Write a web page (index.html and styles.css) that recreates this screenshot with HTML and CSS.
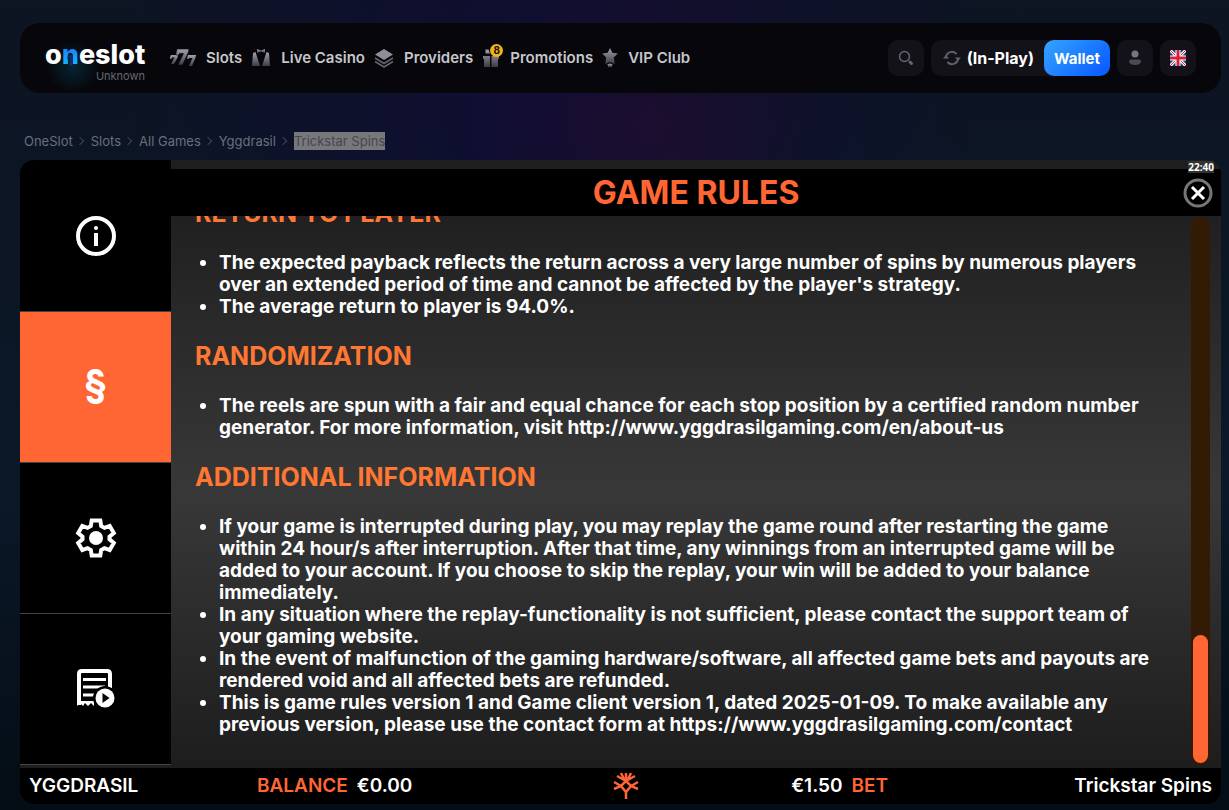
FILE: index.html
```
<!DOCTYPE html>
<html lang="en">
  <head>
    <meta charset="UTF-8" />
    <meta name="viewport" content="width=device-width, initial-scale=1.0" />
    <title>Trickstar Spins - OneSlot</title>
    <link rel="stylesheet" href="styles.css">
  </head>
  <body>
    <svg class="defs" width="0" height="0" aria-hidden="true">
      <linearGradient id="metal" x1="0" y1="0" x2="0" y2="1">
        <stop offset="0" stop-color="#a3a1ae" />
        <stop offset="1" stop-color="#3d3c45" />
      </linearGradient>
    </svg>

    <header class="header">
      <a href="#" class="logo">
        <span class="logo-text">o<span class="logo-n">n</span>eslot</span>
        <span class="logo-user">Unknown</span>
      </a>

      <nav class="nav">
        <a href="#">
          <svg width="26" height="18" viewBox="0 0 26 18">
            <g fill="url(#metal)">
              <path d="M0 8l1-2h7l-.5 2.500L4 15H1l3.500-6.500H2L1.500 10H0z" />
              <path d="M17.500 8l.5-2h8l-.5 2.500L22 17h-3l3.500-8H19l-.5 1H17z" />
              <path d="M6 4.500L7 0h12l-.7 3.500L12.500 16H8l5.500-11.500h-4L9 6H5.700z" stroke="#08070c" stroke-width=".6" />
            </g>
          </svg>
          Slots
        </a>
        <a href="#">
          <svg width="20" height="18" viewBox="0 0 20 18" fill="url(#metal)">
            <path d="M6 0l4 1.500L14 0v4l-4-1.500L6 4z" />
            <path d="M4.500 3L2 4 1 17h8z" />
            <path d="M15.500 3L18 4l1 13h-8z" />
          </svg>
          Live Casino
        </a>
        <a href="#">
          <svg width="20" height="20" viewBox="0 0 20 20">
            <path d="M10 1l9 5.500-9 5.500-9-5.500z" fill="#8f8d9a" />
            <path d="M1 10l9 5.500 9-5.500M1 13.500L10 19l9-5.500" fill="none" stroke="#66646f" stroke-width="1.500" />
          </svg>
          Providers
        </a>
        <a href="#">
          <span class="gift">
            <svg width="18" height="20" viewBox="0 0 18 20" fill="url(#metal)">
              <path d="M3.500 1.500h3l1.500 4H3.500zM1 8h7v3H1zM9.500 8H17v3H9.500zM2 11h6v8H2zM9.500 11H16v8H9.500z" />
            </svg>
            <span class="badge">8</span>
          </span>
          Promotions
        </a>
        <a href="#">
          <svg width="16" height="20" viewBox="0 0 16 20" fill="url(#metal)">
            <path d="M8 0l2.300 4.800 5.500.8-4 3.900 1 6.500-4.800-2-4.800 2 1-6.500-4-3.900 5.500-.8z" />
            <path d="M5 16.500l3-1 3 1-1.200 1v2L8 18.500l-1.800 1v-2z" />
          </svg>
          VIP Club
        </a>
      </nav>

      <div class="actions">
        <button type="button" class="square" aria-label="Search">
          <svg width="18" height="18" viewBox="0 0 18 18" fill="none" stroke="#66656e">
            <circle cx="7.500" cy="7.500" r="5" stroke-width="1.500" />
            <path d="M13 13l1.500 1.500" stroke-width="3" stroke-linecap="round" />
          </svg>
        </button>
        <div class="balance-box">
          <button type="button" class="play">
            <svg width="18" height="18" viewBox="0 0 18 18" fill="none" stroke="#62616b" stroke-width="2">
              <path d="M3 8a6 6 0 0 1 10.500-3M15 10a6 6 0 0 1-10.500 3" />
              <path d="M0 9.500h6L3 6zM12 8.500h6L15 12z" fill="#62616b" stroke="none" />
            </svg>
            (In-Play)
          </button>
          <button type="button" class="wallet">Wallet</button>
        </div>
        <button type="button" class="square" aria-label="Profile">
          <svg width="14" height="16" viewBox="0 0 14 16">
            <circle cx="7" cy="4" r="3.500" fill="#77757f" />
            <path d="M3 9.500h8c3 0 3 5.500-4 5.500S0 9.500 3 9.500z" fill="#4c4b54" />
          </svg>
        </button>
        <button type="button" class="square" aria-label="Language">
          <svg width="16" height="16" viewBox="0 0 16 16">
            <path fill="#1b3a86" d="M0 0h16v16H0z" />
            <path d="M0 0l16 16M16 0L0 16" stroke="#fff" stroke-width="3" />
            <path d="M0 0l16 16M16 0L0 16" stroke="#d8223c" stroke-width="1" />
            <path d="M8 0v16M0 8h16" stroke="#fff" stroke-width="5" />
            <path d="M8 0v16M0 8h16" stroke="#d8223c" stroke-width="3" />
          </svg>
        </button>
      </div>
    </header>

    <nav class="breadcrumbs" aria-label="Breadcrumb">
      <a href="#">OneSlot</a>
      <a href="#">Slots</a>
      <a href="#">All Games</a>
      <a href="#">Yggdrasil</a>
      <span class="current">Trickstar Spins</span>
    </nav>

    <main class="game">
      <span class="clock">22:40</span>
      <div class="game-body">
        <div class="tabs">
          <button type="button" aria-label="Info">
            <svg width="42" height="42" viewBox="0 0 42 42">
              <circle cx="21" cy="21" r="18" fill="none" stroke="#fff" stroke-width="4" />
              <circle cx="21" cy="13" r="2" fill="#fff" />
              <path d="M19 18h4v13h-4z" fill="#fff" />
            </svg>
          </button>
          <button type="button" class="active">§</button>
          <button type="button" aria-label="Settings">
            <svg width="42" height="42" viewBox="0 0 42 42">
              <path d="M16.700 3.500h8.600l.9 5.500 3.300 1.900 5.200-2 4.100 7.200-4.300 3.500v2.800l4.300 3.500-4.100 7.200-5.200-2-3.300 1.900-.9 5.500h-8.600l-.9-5.500-3.300-1.900-5.200 2-4.100-7.200 4.300-3.500v-2.800l-4.300-3.500 4.100-7.200 5.200 2L15.800 9z" fill="none" stroke="#fff" stroke-width="4" />
              <circle cx="21" cy="21" r="7" fill="#fff" />
            </svg>
          </button>
          <button type="button" aria-label="Game history">
            <svg width="42" height="42" viewBox="0 0 42 42">
              <path d="M4 37V6q0-3 3-3h25q3 0 3 3v14" fill="none" stroke="#fff" stroke-width="4" />
              <path d="M8 11.500h23M8 19h22M8 27h11" stroke="#fff" stroke-width="3" />
              <path d="M2 33h17v5l-3-3-3 3-3-3-2 3-3-3-3 3z" fill="#fff" />
              <circle cx="30" cy="30" r="12" />
              <circle cx="30" cy="30" r="9.500" fill="#fff" />
              <path d="M27.500 25l7 5-7 5z" />
            </svg>
          </button>
        </div>

        <section class="rules">
          <div class="rules-title">
            <h1>GAME RULES</h1>
            <button type="button" class="close" aria-label="Close">
              <svg width="30" height="30" viewBox="0 0 30 30" fill="none">
                <circle cx="15" cy="15" r="13" stroke="#777" stroke-width="3" />
                <path d="M9 9l12 12M21 9L9 21" stroke="#fff" stroke-width="3" />
              </svg>
            </button>
          </div>

          <div class="rules-content">
            <div class="rules-text">
              <h2>RETURN TO PLAYER</h2>
              <ul>
                <li>The expected payback reflects the return across a very large number of spins by numerous players<br />over an extended period of time and cannot be affected by the player's strategy.</li>
                <li>The average return to player is 94.0%.</li>
              </ul>
              <h2>RANDOMIZATION</h2>
              <ul>
                <li>The reels are spun with a fair and equal chance for each stop position by a certified random number<br />generator. For more information, visit http://www.yggdrasilgaming.com/en/about-us</li>
              </ul>
              <h2>ADDITIONAL INFORMATION</h2>
              <ul>
                <li>If your game is interrupted during play, you may replay the game round after restarting the game<br />within 24 hour/s after interruption. After that time, any winnings from an interrupted game will be<br />added to your account. If you choose to skip the replay, your win will be added to your balance<br />immediately.</li>
                <li>In any situation where the replay-functionality is not sufficient, please contact the support team of<br />your gaming website.</li>
                <li>In the event of malfunction of the gaming hardware/software, all affected game bets and payouts are<br />rendered void and all affected bets are refunded.</li>
                <li>This is game rules version 1 and Game client version 1, dated 2025-01-09. To make available any<br />previous version, please use the contact form at https://www.yggdrasilgaming.com/contact</li>
              </ul>
            </div>
            <div class="scrollbar"><div class="thumb"></div></div>
          </div>
        </section>
      </div>

      <footer class="game-footer">
        <div class="footer-left">
          <span class="brand">YGGDRASIL</span>
          <span><b>BALANCE</b>€0.00</span>
        </div>
        <svg width="26" height="28" viewBox="0 0 26 28" fill="none" stroke="#ff6633" stroke-width="2.500">
          <path d="M13 27v-7M8 14l5 6 5-6M1 17l7-3 5-5 5 5 7 3M1 10l7 4M25 10l-7 4M13 9V1M13 9L4 4M13 9l9-5M8 1l3 6M18 1l-3 6" />
        </svg>
        <div class="footer-right">
          <span>€1.50<b>BET</b></span>
          <span>Trickstar Spins</span>
        </div>
      </footer>
    </main>
  </body>
</html>
```

FILE: styles.css
```
* {
  box-sizing: border-box;
}

body {
  margin: 0;
  padding: 23px 8px 6px 20px;
  min-height: 100vh;
  font-family: "Inter", "Liberation Sans", sans-serif;
  color: #fff;
  background:
    radial-gradient(circle at 53% 125px, rgba(36, 12, 46, 0.6), transparent 180px),
    radial-gradient(ellipse at 45% 100px, rgba(16, 12, 56, 0.8), transparent 45%),
    linear-gradient(#0d1422, #0b1828 60%, #040d15);
}

button {
  border: none;
  padding: 0;
  background: none;
  color: #fff;
  font-family: inherit;
  cursor: pointer;
}

a {
  color: inherit;
  text-decoration: none;
}

svg {
  display: block;
  flex: none;
}

.defs {
  position: absolute;
}

/* header */
.header {
  display: flex;
  align-items: center;
  height: 70px;
  padding: 0 25px;
  border-radius: 20px;
  background-color: #07070b;
}

.logo {
  display: flex;
  flex-direction: column;
  justify-content: center;
  width: 100px;
  height: 70px;
  margin-right: 25px;
  padding-top: 6px;
  background: radial-gradient(circle at 28px 44px, rgba(0, 120, 170, 0.25), transparent 26px);
}

.logo-text {
  font-size: 27px;
  line-height: 30px;
  font-weight: 800;
}

.logo-n {
  position: relative;
  color: transparent;
  background: linear-gradient(#1b62ff, #12c8ff);
  background-clip: text;
}

.logo-n::after {
  content: "1";
  position: absolute;
  left: 5px;
  bottom: 3px;
  color: #0c2f6b;
  font-size: 15px;
  line-height: 15px;
}

.logo-user {
  font-size: 11px;
  line-height: 12px;
  text-align: right;
  color: #66666e;
}

.nav {
  display: flex;
  gap: 9px;
}

.nav a {
  display: flex;
  align-items: center;
  gap: 10px;
  font-size: 15px;
  line-height: 20px;
  font-weight: 600;
  color: #c6c6cb;
  white-space: nowrap;
}

.gift {
  position: relative;
}

.badge {
  position: absolute;
  top: -4px;
  left: 8px;
  width: 13px;
  height: 13px;
  border-radius: 50%;
  background-color: #f5b217;
  color: #111;
  font-size: 10px;
  line-height: 13px;
  font-weight: 700;
  text-align: center;
}

.actions {
  display: flex;
  gap: 7px;
  margin-left: auto;
}

.square {
  display: flex;
  align-items: center;
  justify-content: center;
  width: 36px;
  height: 36px;
  border-radius: 10px;
  background-color: #121218;
}

.balance-box {
  display: flex;
  border-radius: 10px;
  background-color: #121218;
}

.play {
  display: flex;
  align-items: center;
  gap: 6px;
  padding: 0 10px 0 12px;
  font-size: 16px;
  font-weight: 700;
}

.wallet {
  width: 66px;
  height: 36px;
  border-radius: 10px;
  background: linear-gradient(135deg, #36a4ff, #0557ff);
  font-size: 15px;
  font-weight: 700;
}

/* breadcrumbs */
.breadcrumbs {
  display: flex;
  gap: 8px;
  margin: 39px 4px 10px;
  font-size: 13px;
  line-height: 18px;
  color: #6a6e7d;
}

.breadcrumbs a {
  display: flex;
  align-items: center;
  gap: 4px;
}

.breadcrumbs a::after {
  content: "";
  width: 5px;
  height: 5px;
  border: solid #3e4255;
  border-width: 1px 1px 0 0;
  transform: rotate(45deg);
}

.current {
  background-color: #77787c;
  color: #46474d;
}

/* game */
.game {
  position: relative;
  overflow: hidden;
  border-radius: 14px;
  background-color: #1e1e1e;
}

.clock {
  position: absolute;
  top: 1px;
  right: 7px;
  background-color: #333;
  font-family: "Noto Sans", sans-serif;
  font-size: 10px;
  line-height: 12px;
  font-weight: 700;
}

.game-body {
  display: flex;
  height: 608px;
}

.tabs {
  flex: none;
  width: 151px;
  border-top: 1px solid #000;
}

.tabs button {
  display: flex;
  align-items: center;
  justify-content: center;
  width: 100%;
  height: 151px;
  border-bottom: 1px solid #444;
  background-color: #000;
  font-size: 40px;
  font-weight: 700;
}

.tabs .active {
  padding-bottom: 8px;
  background-color: #ff6633;
}

.rules {
  flex: 1;
  display: flex;
  flex-direction: column;
  min-width: 0;
  padding-top: 9px;
}

.rules-title {
  display: flex;
  align-items: center;
  flex: none;
  height: 47px;
  padding: 0 8px 0 38px;
  background-color: #000;
}

.rules-title h1 {
  flex: 1;
  margin: 0;
  font-size: 32px;
  line-height: 36px;
  text-align: center;
  color: #ff6633;
}

.rules-content {
  flex: 1;
  display: flex;
  min-height: 0;
  padding-right: 11px;
  background: linear-gradient(#202020, #383838 50%, #1d1d1d);
}

/* scrolled to the end of the text */
.rules-text {
  flex: 1;
  display: flex;
  flex-direction: column;
  justify-content: flex-end;
  overflow: hidden;
  padding: 0 0 32px 24px;
}

.rules-text h2 {
  margin: 23px 0 24px;
  font-size: 25px;
  line-height: 30px;
  color: #ff7733;
}

.rules-text ul {
  margin: 0;
  padding-left: 24px;
  font-size: 19px;
  line-height: 22px;
  font-weight: 700;
  white-space: nowrap;
}

.scrollbar {
  display: flex;
  align-items: flex-end;
  width: 19px;
  margin: 1px 0 3px;
  padding: 2px;
  border-radius: 10px;
  background-color: #321a05;
}

.thumb {
  width: 100%;
  height: 128px;
  border-radius: 8px;
  background-color: #ff6633;
}

/* bottom bar */
.game-footer {
  display: grid;
  grid-template-columns: 51fr 26px 50fr;
  align-items: center;
  height: 36px;
  padding: 0 9px;
  background-color: #000;
  font-size: 19px;
  line-height: 22px;
  font-weight: 600;
}

.game-footer b {
  color: #ff6633;
  font-weight: 600;
}

.footer-left,
.footer-right {
  display: flex;
}

.brand {
  width: 228px;
}

.footer-left b {
  margin-right: 9px;
}

.footer-right {
  justify-content: space-between;
  padding-left: 152px;
}

.footer-right b {
  margin-left: 9px;
}
```
